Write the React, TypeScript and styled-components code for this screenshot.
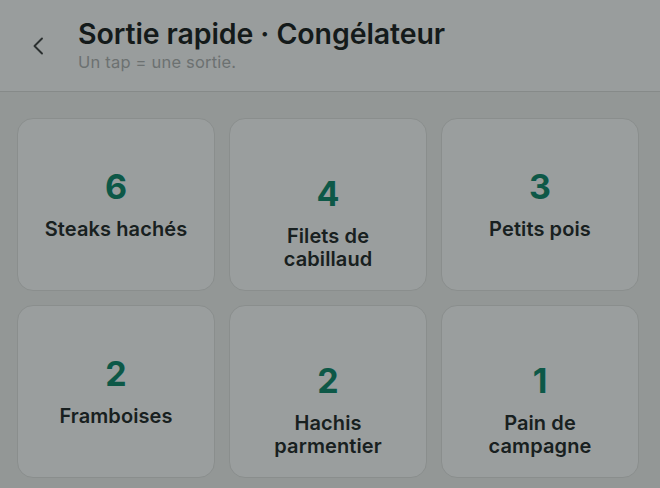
import React from "react";
import styled, { createGlobalStyle } from "styled-components";

const Global = createGlobalStyle`
  html, body { margin: 0; padding: 0; }
  body {
    background: #939796;
    font-family: Inter, "Noto Sans", "Liberation Sans", sans-serif;
    -webkit-font-smoothing: antialiased;
  }
`;

const Page = styled.div`
  width: 660px;
  height: 488px;
  overflow: hidden;
  background: #939796;
  display: flex;
  flex-direction: column;
`;

const Header = styled.header`
  height: 92px;
  box-sizing: border-box;
  background: #999d9d;
  border-bottom: 1px solid #868a89;
  display: flex;
  align-items: flex-start;
  padding: 17px 0 0 30px;
  gap: 32px;
`;

const BackButton = styled.button`
  border: none;
  background: transparent;
  padding: 0;
  margin-top: 19px;
  width: 16px;
  height: 20px;
  display: flex;
  align-items: center;
  justify-content: center;
`;

const TitleBlock = styled.div`
  display: flex;
  flex-direction: column;
`;

const Title = styled.h1`
  margin: 0;
  font-size: 28.5px;
  line-height: 34px;
  font-weight: 600;
  color: #141a1a;
  letter-spacing: -0.1px;
`;

const Subtitle = styled.div`
  margin-top: 1px;
  font-size: 16.5px;
  line-height: 20px;
  color: #6c7171;
  letter-spacing: 0.2px;
`;

const Grid = styled.div`
  display: grid;
  grid-template-columns: repeat(3, 1fr);
  grid-auto-rows: 173px;
  gap: 14px;
  padding: 26px 21px 0 17px;
`;

const Card = styled.button<{ $twoLine?: boolean }>`
  border: 1px solid #8a8e8d;
  background: #9a9e9e;
  border-radius: 16px;
  display: flex;
  flex-direction: column;
  align-items: center;
  justify-content: flex-start;
  padding: ${(p) => (p.$twoLine ? "55px" : "48px")} 12px 0;
  font-family: inherit;
`;

const Count = styled.div`
  font-size: 34px;
  line-height: 40px;
  font-weight: 700;
  color: #0d5847;
`;

const Label = styled.div<{ $narrow?: boolean }>`
  margin-top: 11px;
  font-size: 20px;
  line-height: 23px;
  font-weight: 600;
  color: #182020;
  text-align: center;
  letter-spacing: 0.1px;
  max-width: ${(p) => (p.$narrow ? "130px" : "180px")};
`;

const items = [
  { n: 6, label: "Steaks hachés", two: false },
  { n: 4, label: "Filets de cabillaud", two: true },
  { n: 3, label: "Petits pois", two: false },
  { n: 2, label: "Framboises", two: false },
  { n: 2, label: "Hachis parmentier", two: true },
  { n: 1, label: "Pain de campagne", two: true },
];

export default function App() {
  return (
    <Page>
      <Global />
      <Header>
        <BackButton aria-label="Retour">
          <svg width="12" height="18" viewBox="0 0 12 18" fill="none">
            <path d="M10 1.5 L2.5 9 L10 16.5" stroke="#2a2f2f" strokeWidth="1.9" strokeLinecap="round" strokeLinejoin="round" />
          </svg>
        </BackButton>
        <TitleBlock>
          <Title>Sortie rapide · Congélateur</Title>
          <Subtitle>Un tap = une sortie.</Subtitle>
        </TitleBlock>
      </Header>
      <Grid>
        {items.map((it, i) => (
          <Card key={i} $twoLine={it.two}>
            <Count>{it.n}</Count>
            <Label $narrow={it.two}>{it.label}</Label>
          </Card>
        ))}
      </Grid>
    </Page>
  );
}
